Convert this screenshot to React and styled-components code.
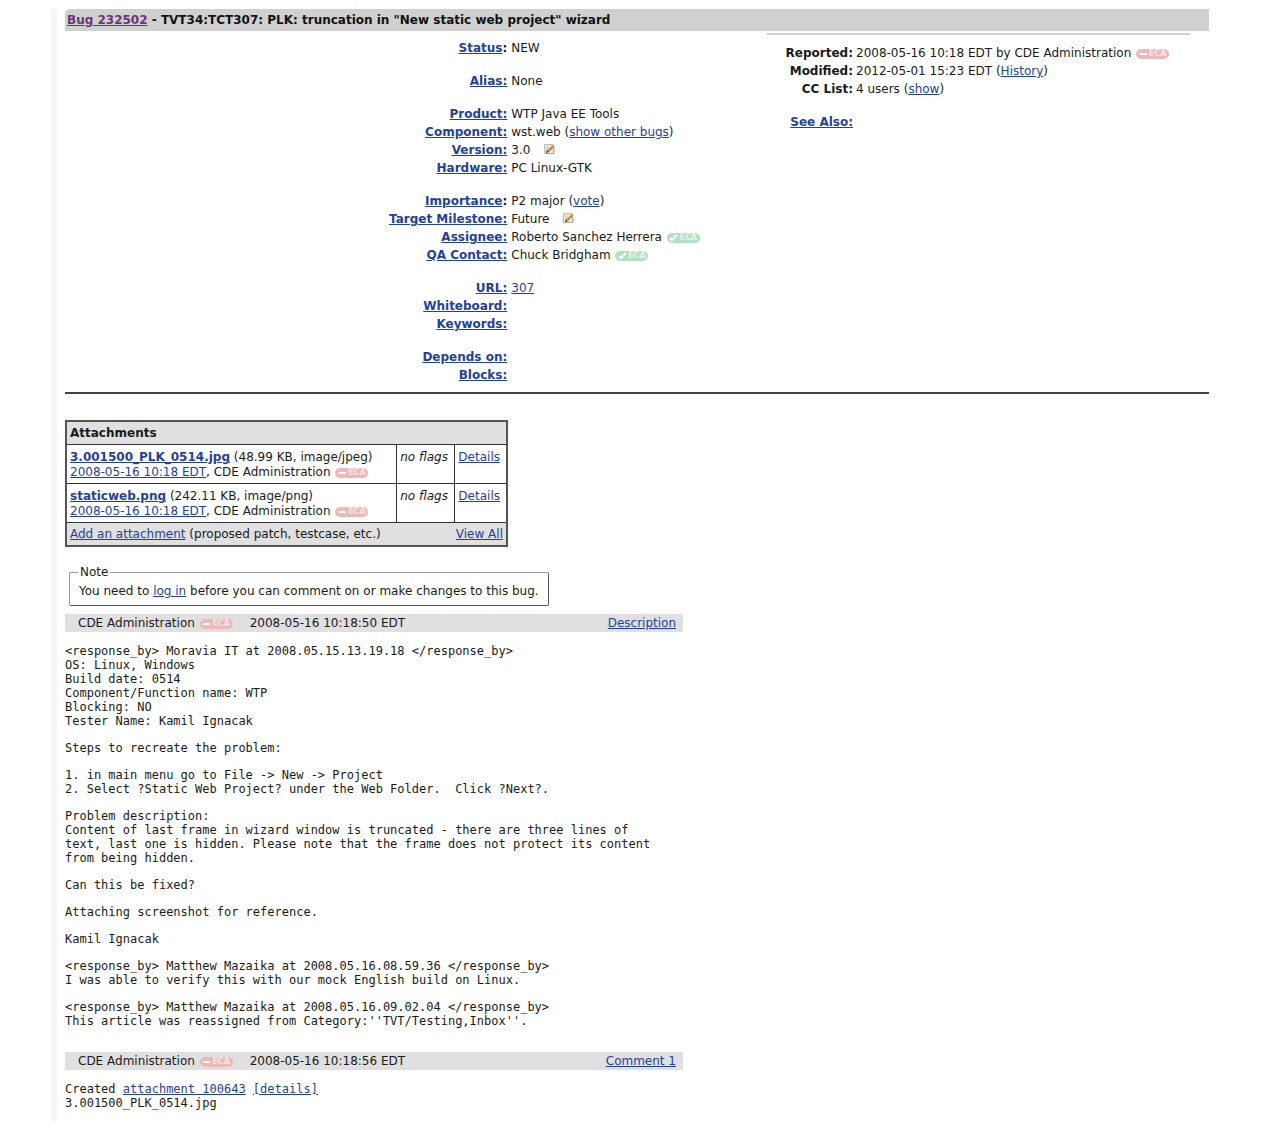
import React from "react"
import styled, { createGlobalStyle } from "styled-components"

const GlobalStyle = createGlobalStyle`
  * { box-sizing: border-box; }
  body {
    margin: 0;
    background: #fff;
    color: #1a1a1a;
    font: 12px/18px "DejaVu Sans", Verdana, sans-serif;
  }
  a { color: #1f419f; text-underline-offset: 1px; }
`

const Page = styled.main`
  margin: 9px 65px 16px 51px;
  padding: 0 0 11px 8px;
  border-left: 6px solid #f5f5f5;
`

const TitleBar = styled.h1`
  margin: 0;
  padding: 0 2px;
  font-size: 12px;
  line-height: 22px;
  background: #d0d0d0;
  border-top-left-radius: 5px;
  color: #111;

  a { color: #6b3578; }
`

const Summary = styled.section`
  display: grid;
  grid-template-columns: minmax(0, 1fr) 423px;
  padding: 2px 19px 8px 0;
  border-bottom: 2px solid #444;
`

const Fields = styled.div`
  display: flex;
  flex-direction: column;
  gap: 15px;
  padding-top: 6px;
`

const History = styled(Fields)`
  align-self: start;
  padding-top: 9px;
  border-top: 2px solid #d0d0d0;
`

const Group = styled.dl`
  margin: 0;
`

const Row = styled.div`
  display: grid;
  grid-template-columns: ${(p) => (p.$side ? "86px" : "63%")} minmax(0, 1fr);
  gap: ${(p) => (p.$side ? "3px" : "4px")};
  min-height: 18px;

  dt { text-align: right; font-weight: bold; white-space: nowrap; }
  dd { margin: 0; white-space: nowrap; }
`

const Badge = styled.span`
  display: inline-flex;
  align-items: center;
  justify-content: center;
  gap: 1px;
  width: 33px;
  height: 10px;
  margin-left: 1px;
  border-radius: 5px;
  vertical-align: -1px;
  background: ${(p) => (p.$signed ? "#b5dfc3" : "#ebb9b9")};
  color: ${(p) => (p.$signed ? "#e2f4e7" : "#fae3e3")};
  font-size: 8px;
  font-weight: bold;
  line-height: 10px;
`

const EditIcon = styled.svg`
  width: 12px;
  height: 12px;
  margin-left: 9px;
  vertical-align: -1px;
`

const Attachments = styled.table`
  width: 443px;
  margin-top: 26px;
  border-collapse: collapse;
  border: 2px solid #555;
  line-height: 15px;

  th, td {
    padding: 5px 3px 3px;
    border: 1px solid #333;
    text-align: left;
    vertical-align: top;
    white-space: nowrap;
  }
  td:first-child { width: 75%; }
  th { padding: 3px; line-height: 16px; }
  thead, tfoot { background: #e0e0e0; }
  tfoot td { padding: 4px 3px 3px; }
`

const FooterLine = styled.div`
  display: flex;
  justify-content: space-between;
`

const Note = styled.fieldset`
  width: fit-content;
  margin: 16px 4px 0;
  padding: 0 9px 5px;
  border: 1px solid #666;
  border-color: #999 #555 #555 #999;
  border-radius: 2px;

  legend { padding: 0 2px; margin-left: -1px; }
  p { margin: 1px 0 0; }
`

const Comment = styled.article`
  max-width: 618px;
  margin-top: ${(p) => (p.$first ? "8px" : "24px")};
`

const CommentHead = styled.header`
  display: flex;
  align-items: center;
  padding: 0 7px 0 13px;
  background: #e0e0e0;

  time { margin-left: 17px; }
  a { margin-left: auto; }
`

const CommentBody = styled.div`
  display: flex;
  flex-direction: column;
  gap: 13px;
  padding-top: 12px;
`

const Text = styled.pre`
  margin: 0;
  font: 12px/14px "DejaVu Sans Mono", monospace;
`

const Eca = ({ signed }) => (
  <Badge $signed={signed}>
    <svg width="9" height="8" viewBox="0 0 9 8" fill="none" stroke="#fff" strokeWidth="2">
      <path d={signed ? "M1 4l2 2 5-5" : "M1 4h7"} />
    </svg>
    ECA
  </Badge>
)

const Edit = () => (
  <EditIcon viewBox="0 0 12 12" role="img" aria-label="Edit">
    <path d="M1.500 1.500h9v9h-9z" fill="#ece7dc" stroke="#c2bcb0" />
    <path d="M2 10.500h9V5" fill="none" stroke="#aaa59c" />
    <path d="M3 4h3M3 6h2" stroke="#c9c9c9" />
    <path d="M4 7l5-5 2 2-5 5-3 1z" fill="#e0ae58" />
    <path d="M3 10l1-3 2 2z" fill="#4b4640" />
    <path d="M6 8l5-5" stroke="#7d6238" />
  </EditIcon>
)

const Label = ({ children, colon }) => (
  <dt><a href="#">{children}</a>{colon && ":"}</dt>
)

const Field = ({ name, colon, children }) => (
  <Row>
    <Label colon={colon}>{name}</Label>
    <dd>{children}</dd>
  </Row>
)

const files = [
  { name: "3.001500_PLK_0514.jpg", info: "(48.99 KB, image/jpeg)" },
  { name: "staticweb.png", info: "(242.11 KB, image/png)" },
]

const description = [
  `<response_by> Moravia IT at 2008.05.15.13.19.18 </response_by>
OS: Linux, Windows
Build date: 0514
Component/Function name: WTP
Blocking: NO
Tester Name: Kamil Ignacak`,
  `Steps to recreate the problem:`,
  `1. in main menu go to File -> New -> Project
2. Select ?Static Web Project? under the Web Folder.  Click ?Next?.`,
  `Problem description:
Content of last frame in wizard window is truncated - there are three lines of
text, last one is hidden. Please note that the frame does not protect its content
from being hidden.`,
  `Can this be fixed?`,
  `Attaching screenshot for reference.`,
  `Kamil Ignacak`,
  `<response_by> Matthew Mazaika at 2008.05.16.08.59.36 </response_by>
I was able to verify this with our mock English build on Linux.`,
  `<response_by> Matthew Mazaika at 2008.05.16.09.02.04 </response_by>
This article was reassigned from Category:''TVT/Testing,Inbox''.`,
]

const App = () => {
  return (
    <>
      <GlobalStyle />
      <Page>
        <TitleBar>
          <a href="#">Bug 232502</a> - TVT34:TCT307: PLK: truncation in "New static web project" wizard
        </TitleBar>

        <Summary>
          <Fields>
            <Group>
              <Field name="Status" colon>NEW</Field>
            </Group>
            <Group>
              <Field name="Alias:">None</Field>
            </Group>
            <Group>
              <Field name="Product:">WTP Java EE Tools</Field>
              <Field name="Component:">wst.web (<a href="#">show other bugs</a>)</Field>
              <Field name="Version:">3.0 <Edit /></Field>
              <Field name="Hardware:">PC Linux-GTK</Field>
            </Group>
            <Group>
              <Field name="Importance" colon>P2 major (<a href="#">vote</a>)</Field>
              <Field name="Target Milestone:">Future <Edit /></Field>
              <Field name="Assignee:">Roberto Sanchez Herrera <Eca signed /></Field>
              <Field name="QA Contact:">Chuck Bridgham <Eca signed /></Field>
            </Group>
            <Group>
              <Field name="URL:"><a href="#">307</a></Field>
              <Field name="Whiteboard:" />
              <Field name="Keywords:" />
            </Group>
            <Group>
              <Field name="Depends on:" />
              <Field name="Blocks:" />
            </Group>
          </Fields>

          <History>
            <Group>
              <Row $side><dt>Reported:</dt><dd>2008-05-16 10:18 EDT by CDE Administration <Eca /></dd></Row>
              <Row $side><dt>Modified:</dt><dd>2012-05-01 15:23 EDT (<a href="#">History</a>)</dd></Row>
              <Row $side><dt>CC List:</dt><dd>4 users (<a href="#">show</a>)</dd></Row>
            </Group>
            <Group>
              <Row $side><Label>See Also:</Label><dd /></Row>
            </Group>
          </History>
        </Summary>

        <Attachments>
          <thead>
            <tr><th colSpan="3">Attachments</th></tr>
          </thead>
          <tbody>
            {files.map((file) => (
              <tr key={file.name}>
                <td>
                  <b><a href="#">{file.name}</a></b> {file.info}<br />
                  <a href="#">2008-05-16 10:18 EDT</a>, CDE Administration <Eca />
                </td>
                <td><i>no flags</i></td>
                <td><a href="#">Details</a></td>
              </tr>
            ))}
          </tbody>
          <tfoot>
            <tr>
              <td colSpan="3">
                <FooterLine>
                  <span><a href="#">Add an attachment</a> (proposed patch, testcase, etc.)</span>
                  <a href="#">View All</a>
                </FooterLine>
              </td>
            </tr>
          </tfoot>
        </Attachments>

        <Note>
          <legend>Note</legend>
          <p>You need to <a href="#">log in</a> before you can comment on or make changes to this bug.</p>
        </Note>

        <Comment $first>
          <CommentHead>
            <span>CDE Administration <Eca /></span>
            <time>2008-05-16 10:18:50 EDT</time>
            <a href="#">Description</a>
          </CommentHead>
          <CommentBody>
            {description.map((text) => <Text key={text}>{text}</Text>)}
          </CommentBody>
        </Comment>

        <Comment>
          <CommentHead>
            <span>CDE Administration <Eca /></span>
            <time>2008-05-16 10:18:56 EDT</time>
            <a href="#">Comment 1</a>
          </CommentHead>
          <CommentBody>
            <Text>Created <a href="#">attachment 100643</a> <a href="#">[details]</a>{"\n"}3.001500_PLK_0514.jpg</Text>
          </CommentBody>
        </Comment>
      </Page>
    </>
  )
}

export default App
